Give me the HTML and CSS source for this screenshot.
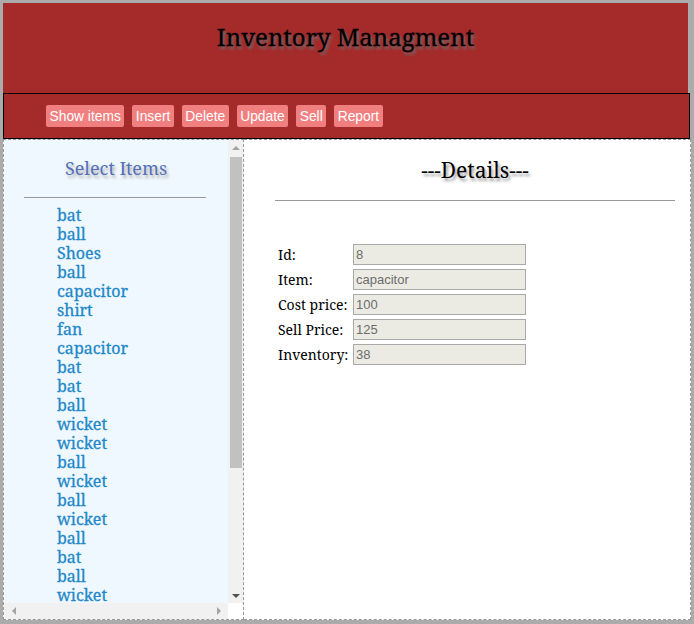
FILE: index.html
```html
<!DOCTYPE html>
<html>
<head>
<meta charset="utf-8">
<link rel="stylesheet" href="styles.css">
</head>
<body>
<div class="page">
  <header class="top">
    <h1 class="title">Inventory Managment</h1>
  </header>
  <nav class="nav">
    <button class="btn">Show items</button>
    <button class="btn">Insert</button>
    <button class="btn">Delete</button>
    <button class="btn">Update</button>
    <button class="btn">Sell</button>
    <button class="btn">Report</button>
  </nav>
  <div class="main">
    <aside class="side">
      <div class="side-content">
        <h2 class="side-title">Select Items</h2>
        <hr class="side-rule">
        <ul class="items">
          <li>bat</li><li>ball</li><li>Shoes</li><li>ball</li><li>capacitor</li><li>shirt</li><li>fan</li><li>capacitor</li><li>bat</li><li>bat</li><li>ball</li><li>wicket</li><li>wicket</li><li>ball</li><li>wicket</li><li>ball</li><li>wicket</li><li>ball</li><li>bat</li><li>ball</li><li>wicket</li><li>ball</li><li>bat</li><li>ball</li>
        </ul>
      </div>
      <div class="vscroll">
        <div class="arrow-box"><span class="tri tri-up"></span></div>
        <div class="track"><div class="thumb"></div></div>
        <div class="arrow-box"><span class="tri tri-down"></span></div>
      </div>
      <div class="hscroll">
        <div class="arrow-box"><span class="tri tri-left"></span></div>
        <div class="arrow-box"><span class="tri tri-right"></span></div>
      </div>
      <div class="corner"></div>
    </aside>
    <section class="details">
      <h2 class="det-title">---Details---</h2>
      <hr class="det-rule">
      <div class="form">
        <label class="lbl">Id:</label><input class="field" value="8" disabled>
        <label class="lbl">Item:</label><input class="field" value="capacitor" disabled>
        <label class="lbl">Cost price:</label><input class="field" value="100" disabled>
        <label class="lbl">Sell Price:</label><input class="field" value="125" disabled>
        <label class="lbl">Inventory:</label><input class="field" value="38" disabled>
      </div>
    </section>
  </div>
</div>
</body>
</html>
```
FILE: styles.css
```css
html, body { margin: 0; padding: 0; }
body {
  background: #ababab;
  width: 694px;
  height: 624px;
  overflow: hidden;
  font-family: "Noto Serif", "DejaVu Serif", serif;
}
.page {
  padding: 3px 0 0 3px;
}
.top {
  width: 685px;
  height: 90px;
  background: #a52a2a;
  display: flex;
  justify-content: center;
}
.title {
  margin: 18px 0 0 0;
  font-size: 24px;
  font-weight: normal;
  color: #000;
  -webkit-text-stroke: 0.3px #000;
  text-shadow: 2px 3px 3px #6e6e6e;
  line-height: 32px;
}
.nav {
  width: 643px;
  height: 44px;
  background: #a52a2a;
  border: 1px solid #000;
  display: flex;
  align-items: center;
  gap: 8px;
  padding-left: 42px;
}
.btn {
  background: #f08080;
  color: #fff;
  border: none;
  border-radius: 2px;
  font-family: "Liberation Sans", Arial, sans-serif;
  font-size: 13.8px;
  height: 22px;
  padding: 0 3.5px;
  margin: 0;
}
.main {
  display: flex;
  height: 481px;
  width: 688px;
}
.side {
  width: 239px;
  height: 479px;
  border: 1px dashed #999;
  background: #f0f8ff;
  flex: none;
  display: grid;
  grid-template-columns: 224px 15px;
  grid-template-rows: 463px 16px;
}
.side-content {
  overflow: hidden;
}
.side-title {
  margin: 15px 0 0 0;
  text-align: center;
  font-size: 18px;
  font-weight: normal;
  color: #5470b8;
  text-shadow: 2px 3px 3px #b0b0b0;
  line-height: 26px;
}
.side-rule {
  margin: 16px 0 0 20px;
  border: none;
  border-top: 1px solid #999;
  width: 182px;
}
.items {
  list-style: none;
  margin: 8px 0 0 0;
  padding: 0 0 0 53px;
}
.items li {
  font-size: 16px;
  line-height: 19px;
  color: #1e88c8;
  font-weight: normal;
  -webkit-text-stroke: 0.3px #1e88c8;
}
.vscroll {
  background: #f1f1f1;
  display: flex;
  flex-direction: column;
}
.arrow-box {
  width: 15px;
  height: 15px;
  display: flex;
  align-items: center;
  justify-content: center;
  flex: none;
}
.track {
  flex: 1;
  padding: 2px 1px 120px 2px;
}
.thumb {
  background: #c1c1c1;
  height: 100%;
}
.tri { width: 0; height: 0; display: block; }
.tri-up {
  border-left: 4px solid transparent;
  border-right: 4px solid transparent;
  border-bottom: 4px solid #a3a3a3;
}
.tri-down {
  border-left: 4px solid transparent;
  border-right: 4px solid transparent;
  border-top: 4px solid #505050;
}
.tri-left {
  border-top: 4px solid transparent;
  border-bottom: 4px solid transparent;
  border-right: 4px solid #a3a3a3;
}
.tri-right {
  border-top: 4px solid transparent;
  border-bottom: 4px solid transparent;
  border-left: 4px solid #a3a3a3;
}
.hscroll {
  background: #f1f1f1;
  display: flex;
  justify-content: space-between;
  align-items: center;
  padding: 0 2px;
}
.corner {
  background: #fff;
}
.details {
  flex: 1;
  height: 479px;
  background: #fff;
  border: 1px dashed #999;
  border-left: none;
  padding-left: 16px;
}
.det-title {
  margin: 16px 0 0 0;
  text-align: center;
  font-size: 21px;
  font-weight: normal;
  color: #000;
  text-shadow: 2px 3px 3px #999;
  line-height: 28px;
}
.det-rule {
  margin: 16px 15px 0 15px;
  border: none;
  border-top: 1px solid #999;
}
.form {
  margin: 43px 0 0 18px;
  display: grid;
  grid-template-columns: 75px 173px;
  row-gap: 4px;
  align-items: center;
}
.lbl {
  font-size: 14px;
  color: #000;
  white-space: nowrap;
}
.field {
  width: 173px;
  height: 21px;
  box-sizing: border-box;
  background: #ebebe4;
  border: 1px solid #a9a9a9;
  color: #6d6d6d;
  font-family: "Liberation Sans", Arial, sans-serif;
  font-size: 13px;
  padding: 0 2px;
  margin: 0;
}
```
